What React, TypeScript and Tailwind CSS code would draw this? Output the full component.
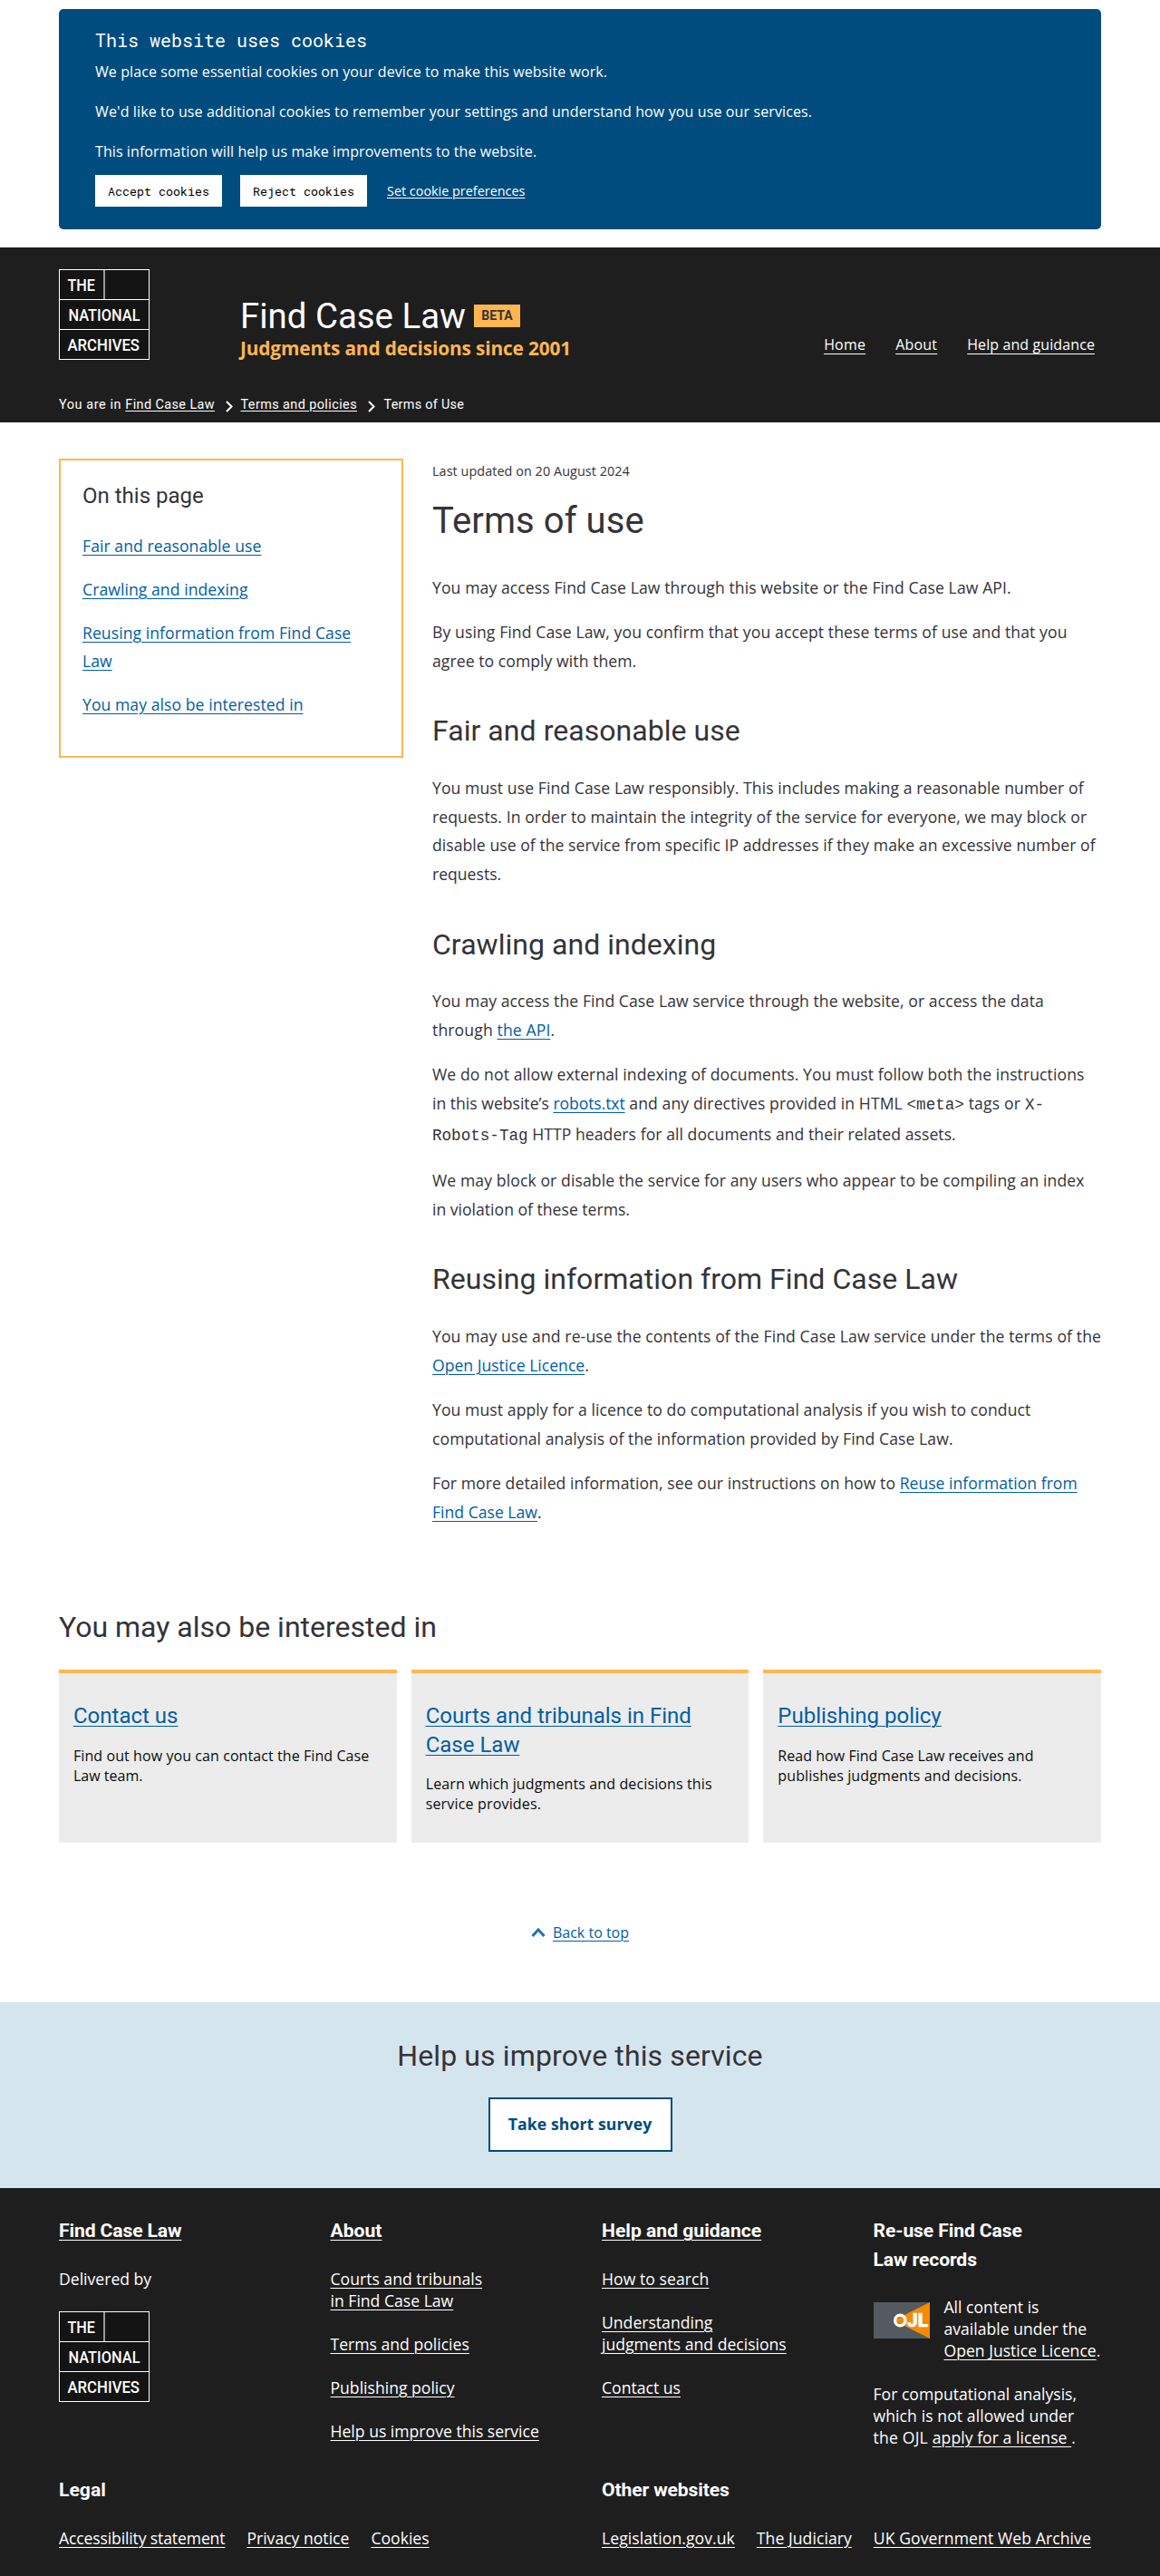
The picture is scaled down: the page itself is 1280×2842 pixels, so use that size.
import type { ReactNode } from "react";

const code = "font-['Liberation_Mono',monospace] tracking-normal";
const blue = "text-[#005ea5]";

function A({ children, className = "", offset = "underline-offset-[3px]" }: { children: ReactNode; className?: string; offset?: string }) {
  return <a href="#" className={`underline decoration-1 ${offset} ${className}`}>{children}</a>;
}

function Logo() {
  return (
    <svg width="100" height="100" viewBox="0 0 100 100" className="block" role="img" aria-label="The National Archives">
      <rect x="0.5" y="0.5" width="99" height="99" fill="#141414" stroke="#fff" />
      <path d="M0 33.5H100M0 66.5H100" stroke="#fff" />
      <path d="M50 1V33" stroke="#999" strokeWidth="2" />
      <g fill="#fff" fontFamily="Roboto" fontWeight="500" fontSize="19">
        <text x="9.5" y="23.7" textLength="30.5" lengthAdjust="spacingAndGlyphs">THE</text>
        <text x="10.5" y="57" textLength="79" lengthAdjust="spacingAndGlyphs">NATIONAL</text>
        <text x="9.5" y="89.7" textLength="79.5" lengthAdjust="spacingAndGlyphs">ARCHIVES</text>
      </g>
    </svg>
  );
}

function Ojl() {
  return (
    <svg width="62" height="40" viewBox="0 0 62 40" className="block shrink-0" role="img" aria-label="Open Justice Licence">
      <rect width="62" height="40" fill="#535a60" />
      <path d="M22 20L62 0V40Z" fill="#f78b00" />
      <circle cx="29.3" cy="20" r="5.7" fill="none" stroke="#fff" strokeWidth="3.4" />
      <text x="37" y="27" fill="#fff" stroke="#fff" strokeWidth="0.5" fontFamily="Roboto" fontWeight="900" fontSize="19.5" textLength="23" lengthAdjust="spacingAndGlyphs">JL</text>
    </svg>
  );
}

function Chevron() {
  return (
    <svg width="8" height="13" viewBox="0 0 8 13" className="mt-[2px] mr-[8.5px] ml-3">
      <path d="M1 1L6.5 6.5L1 12" fill="none" stroke="#fff" strokeWidth="2" />
    </svg>
  );
}

function H2({ children, className = "" }: { children: ReactNode; className?: string }) {
  return <h2 className={`font-['Roboto',sans-serif] text-[32px] leading-[40px] text-[#343338] ${className}`}>{children}</h2>;
}

function P({ children }: { children: ReactNode }) {
  return <p className="mb-[17.6px] last:mb-0 whitespace-nowrap">{children}</p>;
}

function FootHead({ children, className = "mb-[25.3px]" }: { children: ReactNode; className?: string }) {
  return <h2 className={`font-['Roboto',sans-serif] text-[21.12px] leading-[31.68px] font-bold ${className}`}>{children}</h2>;
}

const cards: { id: string; title: ReactNode; text: ReactNode }[] = [
  {
    id: "contact",
    title: "Contact us",
    text: <><span className="tracking-[0.08px]">Find out how you can contact the Find Case</span><br />Law team.</>,
  },
  {
    id: "courts",
    title: <>Courts and tribunals in Find<br />Case Law</>,
    text: <><span className="tracking-[0.12px]">Learn which judgments and decisions this</span><br /><span className="tracking-[0.17px]">service provides.</span></>,
  },
  {
    id: "publishing",
    title: "Publishing policy",
    text: <><span className="tracking-[0.04px]">Read how Find Case Law receives and</span><br /><span className="tracking-[0.12px]">publishes judgments and decisions.</span></>,
  },
];

function CookieBanner() {
  return (
    <div className="pt-[10px] pb-5">
      <div className="mx-auto h-[243px] w-[1150px] rounded-[5px] bg-[#004c7e] px-10 pt-[22px] text-base leading-[22px] text-white">
        <h2 className="mb-3 font-['Roboto_Mono',monospace] text-[20px] leading-6">This website uses cookies</h2>
        <p className="mb-[22px] tracking-[0.085px]">We place some essential cookies on your device to make this website work.</p>
        <p className="mb-[22px] tracking-[0.12px]">We'd like to use additional cookies to remember your settings and understand how you use our services.</p>
        <p className="tracking-[0.084px]">This information will help us make improvements to the website.</p>
        <div className="mt-[15px] flex items-center">
          <button className="h-[35px] w-[140px] bg-white font-['Roboto_Mono',monospace] text-[13.333px] text-black">Accept cookies</button>
          <button className="ml-5 h-[35px] w-[140px] bg-white font-['Roboto_Mono',monospace] text-[13.333px] text-black">Reject cookies</button>
          <A className="ml-[22px] text-[14.4px]" offset="underline-offset-2">Set cookie preferences</A>
        </div>
      </div>
    </div>
  );
}

function Header() {
  return (
    <header className="h-[193px] bg-[#1e1e1e] pt-6 text-white">
      <div className="mx-auto flex h-[117px] w-[1150px] items-start">
        <Logo />
        <div className="ml-[100px] pt-[30px]">
          <div className="flex h-[44px] items-center">
            <span className="font-['Roboto',sans-serif] text-[38.4px] leading-[44px]">Find Case Law</span>
            <span className="-mt-px ml-[9px] flex h-[25px] w-[51px] items-center justify-center bg-[#ffb650] font-['Roboto',sans-serif] text-[14px] font-bold text-[#343338]">BETA</span>
          </div>
          <p className="-mt-px text-[20.8px] leading-[28px] font-bold tracking-[-0.12px] text-[#ffb650]">Judgments and decisions since 2001</p>
        </div>
        <nav className="ml-auto flex gap-[33px] pt-[72px] pr-[7px] text-base leading-[22px]">
          <A offset="underline-offset-4" className="tracking-[0.2px]">Home</A>
          <A offset="underline-offset-4" className="tracking-[0.2px]">About</A>
          <A offset="underline-offset-4" className="tracking-[0.1px]">Help and guidance</A>
        </nav>
      </div>
      <div className="mx-auto flex w-[1150px] items-center pt-5 font-['Roboto',sans-serif] text-[14.4px] leading-[26px] tracking-[0.42px]">
        <span className="tracking-[0.6px] whitespace-pre">You are in </span>
        <A offset="underline-offset-2">Find Case Law</A>
        <Chevron />
        <A offset="underline-offset-2">Terms and policies</A>
        <Chevron />
        <span className="ml-px tracking-[0.3px]">Terms of Use</span>
      </div>
    </header>
  );
}

function Footer() {
  return (
    <footer className="h-[428px] bg-[#1e1e1e] pt-[31px] leading-6 whitespace-nowrap text-white">
      <div className="mx-auto grid h-[286.5px] w-[1150px] grid-cols-4 gap-x-12">
        <div>
          <FootHead><A className="tracking-[-0.12px]">Find Case Law</A></FootHead>
          <p className="mb-6">Delivered by</p>
          <Logo />
        </div>
        <div>
          <FootHead><A>About</A></FootHead>
          <ul className="space-y-6">
            <li><A>Courts and tribunals<br />in Find Case Law</A></li>
            <li><A>Terms and policies</A></li>
            <li><A>Publishing policy</A></li>
            <li><A>Help us improve this service</A></li>
          </ul>
        </div>
        <div>
          <FootHead><A>Help and guidance</A></FootHead>
          <ul className="space-y-6">
            <li><A className="tracking-[0.06px]">How to search</A></li>
            <li><A>Understanding<br />judgments and decisions</A></li>
            <li><A>Contact us</A></li>
          </ul>
        </div>
        <div>
          <FootHead className="mb-[24.6px] tracking-[-0.11px]">Re-use Find Case<br />Law records</FootHead>
          <div className="mb-6 flex gap-4">
            <div className="pt-[7px]"><Ojl /></div>
            <p>All content is<br />available under the<br /><A>Open Justice Licence</A>.</p>
          </div>
          <p>
            For computational analysis,<br />
            <span className="tracking-[0.08px]">which is not allowed under</span><br />
            <span className="tracking-[0.2px]">the OJL </span><A className="tracking-[0.04px]">apply for a license </A>.
          </p>
        </div>
      </div>
      <div className="mx-auto grid w-[1150px] grid-cols-2 gap-x-12">
        <div>
          <FootHead className="mb-[24.6px]">Legal</FootHead>
          <div className="flex gap-6">
            <A className="tracking-[-0.14px]">Accessibility statement</A>
            <A>Privacy notice</A>
            <A>Cookies</A>
          </div>
        </div>
        <div>
          <FootHead className="mb-[24.6px] tracking-[-0.12px]">Other websites</FootHead>
          <div className="flex gap-6">
            <A className="tracking-[0.05px]">Legislation.gov.uk</A>
            <A className="tracking-[0.05px]">The Judiciary</A>
            <A className="tracking-[0.08px]">UK Government Web Archive</A>
          </div>
        </div>
      </div>
    </footer>
  );
}

export default function App() {
  return (
    <div className="bg-white font-['Open_Sans',sans-serif] text-[17.6px] leading-[31.68px] text-[#343338]">
      <CookieBanner />
      <Header />

      <main className="mx-auto w-[1150px]">
        <div className="flex items-start gap-8 pt-10">
          <aside className="h-[330px] w-[380px] shrink-0 border-2 border-[#ffb650] px-6 pt-[23.2px]">
            <h2 className="mb-6 font-['Roboto',sans-serif] text-[24px] leading-8">On this page</h2>
            <ul className={`space-y-4 tracking-[0.06px] ${blue}`}>
              <li><A>Fair and reasonable use</A></li>
              <li><A>Crawling and indexing</A></li>
              <li><A>Reusing information from Find Case<br />Law</A></li>
              <li><A>You may also be interested in</A></li>
            </ul>
          </aside>

          <div className="min-w-0 flex-1 pt-px">
            <p className="text-[14.4px] leading-[26px] tracking-[0.06px]">Last updated on 20 August 2024</p>
            <h1 className="mt-[18px] mb-[33.6px] font-['Roboto',sans-serif] text-[40px] leading-[48px] tracking-[0.07px]">Terms of use</h1>
            <section>
              <P><span className="tracking-[0.09px]">You may access Find Case Law through this website or the Find Case Law API.</span></P>
              <P>
                <span className="tracking-[0.095px]">By using Find Case Law, you confirm that you accept these terms of use and that you</span><br />
                <span className="tracking-[0.06px]">agree to comply with them.</span>
              </P>
            </section>

            <H2 className="mt-[41.1px] mb-[27.6px] tracking-[0.05px]">Fair and reasonable use</H2>
            <section>
              <P>
                <span className="tracking-[0.08px]">You must use Find Case Law responsibly. This includes making a reasonable number of</span><br />
                <span className="tracking-[0.09px]">requests. In order to maintain the integrity of the service for everyone, we may block or</span><br />
                <span className="tracking-[0.047px]">disable use of the service from specific IP addresses if they make an excessive number of</span><br />
                requests.
              </P>
            </section>

            <H2 className="mt-[41px] mb-[27.6px] tracking-[0.04px]">Crawling and indexing</H2>
            <section>
              <P>
                <span className="tracking-[0.068px]">You may access the Find Case Law service through the website, or access the data</span><br />
                <span className="tracking-[0.12px]">through <A className={blue}>the API</A></span>.
              </P>
              <P>
                <span className="tracking-[0.08px]">We do not allow external indexing of documents. You must follow both the instructions</span><br />
                in this website’s <A className={`tracking-[-0.1px] ${blue}`}>robots.txt</A>
                <span className="tracking-[0.1px]"> and any directives provided in HTML </span>
                <code className={code}>&lt;meta&gt;</code>
                <span className="tracking-[0.17px]"> tags or </span>
                <code className={code}>X-<br />Robots-Tag</code>
                <span className="tracking-[0.055px]"> HTTP headers for all documents and their related assets.</span>
              </P>
              <P>
                <span className="tracking-[0.095px]">We may block or disable the service for any users who appear to be compiling an index</span><br />
                in violation of these terms.
              </P>
            </section>

            <H2 className="mt-[41px] mb-[27.6px] tracking-[0.03px]">Reusing information from Find Case Law</H2>
            <section>
              <P>
                <span className="tracking-[0.1px]">You may use and re-use the contents of the Find Case Law service under the terms of the</span><br />
                <A className={blue}>Open Justice Licence</A>.
              </P>
              <P>
                <span className="tracking-[0.078px]">You must apply for a licence to do computational analysis if you wish to conduct</span><br />
                <span className="tracking-[0.07px]">computational analysis of the information provided by Find Case Law.</span>
              </P>
              <P>
                <span className="tracking-[0.075px]">For more detailed information, see our instructions on how to </span>
                <A className={blue}>Reuse information from<br />Find Case Law</A>.
              </P>
            </section>
          </div>
        </div>

        <H2 className="mt-[90.8px] mb-[27px]">You may also be interested in</H2>
        <div className="grid grid-cols-3 gap-4">
          {cards.map(({ id, title, text }) => (
            <div key={id} className="h-[191px] border-t-4 border-[#ffb650] bg-[#ececec] px-4 pt-[32.3px] whitespace-nowrap">
              <h3 className={`mb-[15.7px] font-['Roboto',sans-serif] text-[24px] leading-[31.68px] ${blue}`}><A>{title}</A></h3>
              <p className="text-base leading-[22px] text-[#0b0c0c]">{text}</p>
            </div>
          ))}
        </div>

        <div className="mt-[86px] flex h-[26px] items-center justify-center text-base">
          <svg width="16" height="10" viewBox="0 0 16 10" className="mr-2">
            <path d="M1.5 9L8 2L14.5 9" fill="none" stroke="#1d70b8" strokeWidth="3" />
          </svg>
          <A className={blue}>Back to top</A>
        </div>
      </main>

      <section className="mt-16 flex h-[205px] flex-col items-center bg-[#d5e5ee] pt-[39px]">
        <H2 className="tracking-[0.12px]">Help us improve this service</H2>
        <a href="#" className="mt-[26px] flex h-[60px] w-[203px] items-center justify-center border-2 border-[#004c7e] bg-white font-bold tracking-[0.1px] text-[#004c7e]">Take short survey</a>
      </section>

      <Footer />
    </div>
  );
}
